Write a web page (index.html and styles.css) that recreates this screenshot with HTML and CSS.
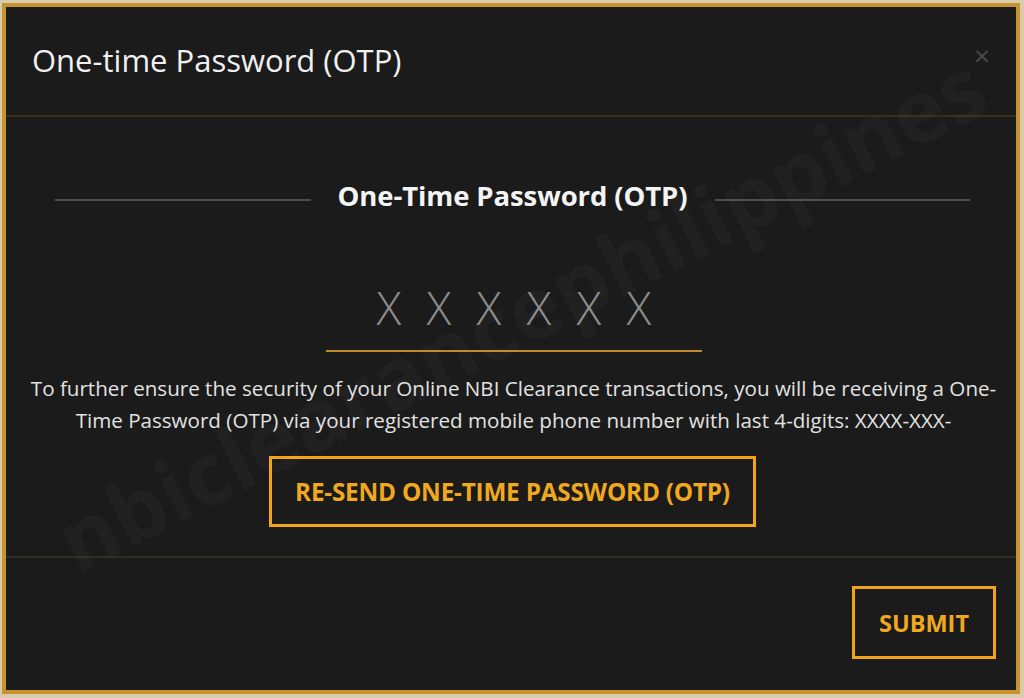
FILE: index.html
```html
<!DOCTYPE html>
<html lang="en">
<head>
<meta charset="utf-8">
<title>One-time Password (OTP)</title>
<link rel="stylesheet" href="styles.css">
</head>
<body>
<div class="modal">
  <div class="modal-header">
    <h1 class="modal-title">One-time Password (OTP)</h1>
    <span class="close">&times;</span>
  </div>
  <div class="modal-body">
    <div class="section-head">
      <span class="rule"></span>
      <h2 class="section-title">One-Time Password (OTP)</h2>
      <span class="rule"></span>
    </div>
    <div class="otp">
      <div class="otp-field">
        <span>X</span><span>X</span><span>X</span><span>X</span><span>X</span><span>X</span>
      </div>
    </div>
    <p class="notice">To further ensure the security of your Online NBI Clearance transactions, you will be receiving a One-Time Password (OTP) via your registered mobile phone number with last 4-digits: XXXX-XXX-</p>
    <div class="resend-row">
      <button class="btn btn-resend">RE-SEND ONE-TIME PASSWORD (OTP)</button>
    </div>
  </div>
  <div class="modal-footer">
    <button class="btn btn-submit">SUBMIT</button>
  </div>
  <div class="watermark">nbiclearancephilippines</div>
</div>
</body>
</html>
```

FILE: styles.css
```css
* { box-sizing: border-box; }

html, body {
  margin: 0;
  padding: 0;
  height: 100%;
}

body {
  background: #d9ccac;
  font-family: "Open Sans", "Liberation Sans", sans-serif;
  padding: 3px 4px 4px 2px;
}

.modal {
  position: relative;
  overflow: hidden;
  height: 691px;
  background: #1b1b1b;
  border: 4px solid #c8922e;
  display: flex;
  flex-direction: column;
}

.modal-header {
  height: 110px;
  border-bottom: 2px solid #3b2d1a;
  display: flex;
  align-items: center;
  justify-content: space-between;
  padding: 0 26px 0 26px;
}

.modal-title {
  margin: 0;
  font-size: 31px;
  font-weight: 400;
  color: #f0f0f0;
  padding-bottom: 3px;
}

.close {
  color: #4a4a4a;
  font-size: 28px;
  line-height: 1;
  padding-bottom: 12px;
}

.modal-body {
  height: 441px;
  border-bottom: 2px solid #302d27;
  padding: 60px 46px 0 49px;
}

.section-head {
  display: flex;
  align-items: center;
  gap: 27px;
}

.rule {
  flex: 1;
  height: 2px;
  background: #4e4e4e;
  margin-top: 8px;
}

.section-title {
  margin: 0;
  font-size: 27.5px;
  font-weight: 700;
  color: #f4f4f4;
  letter-spacing: -0.1px;
}

.otp {
  display: flex;
  justify-content: center;
  margin-top: 73px;
}

.otp-field {
  width: 376px;
  height: 63px;
  margin-left: 2px;
  border-bottom: 2px solid #c08a2a;
  display: flex;
  justify-content: center;
  align-items: flex-start;
  gap: 26px;
  box-sizing: content-box;
}

.otp-field span {
  font-size: 46px;
  font-weight: 300;
  line-height: 40px;
  color: #8c8c8c;
  width: 24px;
  text-align: center;
}

.notice {
  margin: 20px -42px 0 -40px;
  text-align: center;
  font-size: 20.6px;
  line-height: 32px;
  color: #e2e2e2;
}

.resend-row {
  display: flex;
  justify-content: center;
  margin-top: 20px;
}

.btn {
  background: transparent;
  font-family: "Open Sans", "Liberation Sans", sans-serif;
  font-weight: 700;
  color: #f0a81e;
  border: 3px solid #f2a51a;
  cursor: pointer;
  padding: 0;
}

.btn-resend {
  width: 487px;
  height: 71px;
  font-size: 24.3px;
  letter-spacing: -0.2px;
}

.modal-footer {
  flex: 1;
  display: flex;
  justify-content: flex-end;
  align-items: flex-start;
  padding: 28px 20px 0 0;
}

.btn-submit {
  width: 144px;
  height: 73px;
  font-size: 23.5px;
}

.watermark {
  position: absolute;
  left: 56px;
  top: 480px;
  font-size: 86px;
  font-weight: 700;
  color: rgba(255, 255, 255, 0.028);
  transform: rotate(-27deg);
  transform-origin: left center;
  white-space: nowrap;
  pointer-events: none;
}
```
